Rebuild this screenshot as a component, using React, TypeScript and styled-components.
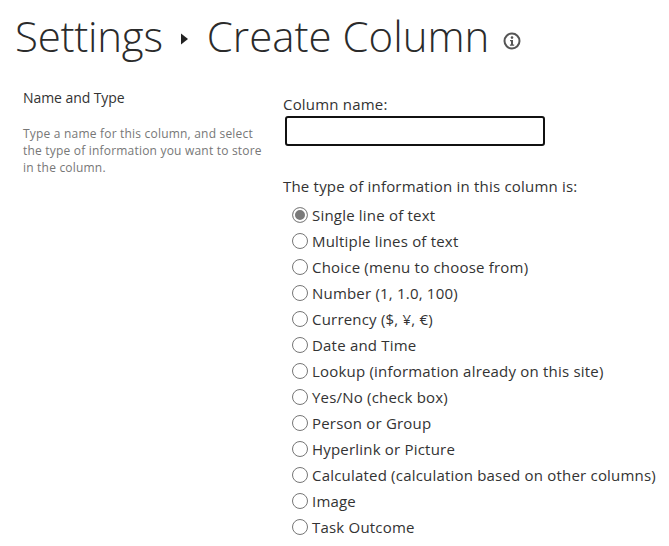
import React from "react";
import styled, { createGlobalStyle } from "styled-components";

const Global = createGlobalStyle`
  html, body { margin: 0; padding: 0; background: #fff; }
  body { font-family: "Open Sans", "Noto Sans", sans-serif; overflow: hidden; }
`;
const Page = styled.div`
  width: 669px; height: 546px; overflow: hidden; box-sizing: border-box;
  padding: 6px 0 0 15px;
`;
const Title = styled.h1`
  margin: 0; display: flex; align-items: center; height: 60px;
  font-size: 42px; font-weight: 300; line-height: 60px; color: #2b2b2b;
  white-space: nowrap;
`;
const Crumb = styled.span``;
const SettingsCrumb = styled(Crumb)`
  letter-spacing: -0.25px;
`;
const Arrow = styled.svg`
  width: 7px; height: 12px; margin: 6px 19px 0 18px; flex: none;
`;
const InfoIcon = styled.svg`
  width: 18px; height: 18px; margin: 9px 0 0 14px; flex: none;
`;
const Body = styled.div`
  display: grid; grid-template-columns: 268px 1fr; margin-top: 16px;
`;
const Side = styled.div`
  padding: 6px 0 0 8px;
`;
const SideTitle = styled.div`
  font-size: 14px; line-height: 20px; color: #333; letter-spacing: -0.07px;
`;
const SideText = styled.p`
  margin: 17px 0 0; font-size: 12px; line-height: 17px; color: #777; width: 244px; letter-spacing: 0.2px;
`;
const Main = styled.div`
  padding-top: 12px;
`;
const Label = styled.label`
  display: block; font-size: 15px; line-height: 20px; color: #333; letter-spacing: 0.2px;
`;
const NameInput = styled.input`
  display: block; box-sizing: border-box; width: 260px; height: 30px; margin: 2px 0 0 2px;
  border: 2px solid #111; border-radius: 3px; background: #fff; outline: none;
`;
const TypeLabel = styled(Label)`
  margin-top: 30px;
`;
const Options = styled.div`
  display: flex; flex-direction: column; margin-top: 6px; padding-left: 9px;
`;
const Option = styled.label`
  display: flex; align-items: center; height: 26px; gap: 4px;
  font-size: 15px; color: #333; letter-spacing: 0.2px; white-space: nowrap;
`;
const Radio = styled.input`
  appearance: none; margin: 0; width: 16px; height: 16px; flex: none;
  border: 1px solid #767676; border-radius: 50%; background: #fff; position: relative;
  &:checked { border-color: #8c8c8c; box-shadow: inset 0 0 0 2px #fff; background: #7a7a7a; }
`;

const options = [
  "Single line of text",
  "Multiple lines of text",
  "Choice (menu to choose from)",
  "Number (1, 1.0, 100)",
  "Currency ($, ¥, €)",
  "Date and Time",
  "Lookup (information already on this site)",
  "Yes/No (check box)",
  "Person or Group",
  "Hyperlink or Picture",
  "Calculated (calculation based on other columns)",
  "Image",
  "Task Outcome",
];

export default function App() {
  return (
    <Page>
      <Global />
      <Title>
        <SettingsCrumb>Settings</SettingsCrumb>
        <Arrow viewBox="0 0 7 12"><path d="M0 0.5 L7 6 L0 11.5 Z" fill="#222" /></Arrow>
        <Crumb>Create Column</Crumb>
        <InfoIcon viewBox="0 0 18 18">
          <circle cx="9" cy="9" r="7.5" fill="none" stroke="#555" strokeWidth="2" />
          <circle cx="9" cy="5.6" r="1.3" fill="#555" />
          <path d="M7 8h3v4.5h1.2v1.2H6.9v-1.2H8V9.2H7z" fill="#555" />
        </InfoIcon>
      </Title>
      <Body>
        <Side>
          <SideTitle>Name and Type</SideTitle>
          <SideText>Type a name for this column, and select the type of information you want to store in the column.</SideText>
        </Side>
        <Main>
          <Label htmlFor="col-name">Column name:</Label>
          <NameInput id="col-name" type="text" />
          <TypeLabel as="div">The type of information in this column is:</TypeLabel>
          <Options>
            {options.map((o, i) => (
              <Option key={o}>
                <Radio type="radio" name="coltype" defaultChecked={i === 0} />
                {o}
              </Option>
            ))}
          </Options>
        </Main>
      </Body>
    </Page>
  );
}
